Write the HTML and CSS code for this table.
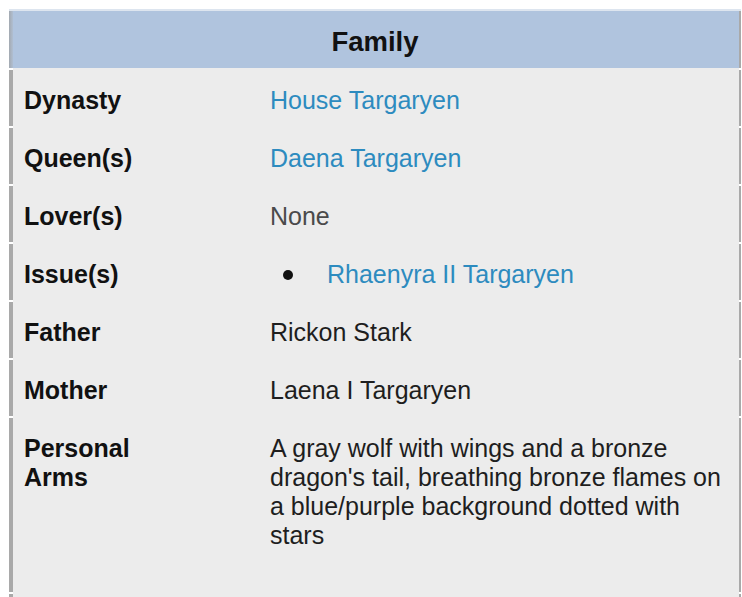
FILE: index.html
```html
<!DOCTYPE html>
<html>
<head>
<meta charset="utf-8">
<link rel="stylesheet" href="styles.css">
</head>
<body>
<div class="infobox">
  <div class="head">Family</div>
  <div class="row">
    <div class="label">Dynasty</div>
    <div class="value"><a class="link">House Targaryen</a></div>
  </div>
  <div class="row">
    <div class="label">Queen(s)</div>
    <div class="value"><a class="link">Daena Targaryen</a></div>
  </div>
  <div class="row">
    <div class="label">Lover(s)</div>
    <div class="value muted">None</div>
  </div>
  <div class="row">
    <div class="label">Issue(s)</div>
    <div class="value">
      <ul class="list"><li class="item"><a class="link">Rhaenyra II Targaryen</a></li></ul>
    </div>
  </div>
  <div class="row">
    <div class="label">Father</div>
    <div class="value">Rickon Stark</div>
  </div>
  <div class="row">
    <div class="label">Mother</div>
    <div class="value">Laena I Targaryen</div>
  </div>
  <div class="row tall">
    <div class="label">Personal<br>Arms</div>
    <div class="value">A gray wolf with wings and a bronze dragon's tail, breathing bronze flames on a blue/purple background dotted with stars</div>
  </div>
  <div class="row stub"></div>
</div>
</body>
</html>
```

FILE: styles.css
```css
html, body {
  margin: 0;
  padding: 0;
  background: #ffffff;
}
body {
  font-family: "Liberation Sans", Arial, sans-serif;
  overflow: hidden;
  height: 597px;
}
.infobox {
  margin: 9px 0 0 9px;
  width: 732px;
  border-top: 2px solid #dde5ef;
}
.head {
  height: 57px;
  box-sizing: border-box;
  padding-top: 5px;
  line-height: 52px;
  text-align: center;
  font-size: 27.5px;
  font-weight: bold;
  color: #111;
  background:
    linear-gradient(to right, #a3a9b0, #b0bfd2) left top / 4px 100% no-repeat,
    linear-gradient(#a9a9a9, #a9a9a9) right top / 2px 100% no-repeat,
    #b0c4de;
}
.row {
  display: grid;
  grid-template-columns: 257px 1fr;
  height: 58px;
  box-sizing: border-box;
  padding: 18px 8px 11px 4px;
  font-size: 25px;
  line-height: 29px;
  color: #1a1a1a;
  background:
    linear-gradient(#fff, #fff) left top / 4px 2px no-repeat,
    linear-gradient(#fff, #fff) right top / 2px 2px no-repeat,
    linear-gradient(#a9a9a9, #a9a9a9) left top / 4px 100% no-repeat,
    linear-gradient(#a9a9a9, #a9a9a9) right top / 2px 100% no-repeat,
    #ececec;
}
.row.tall {
  height: 176px;
  padding-top: 18px;
}
.row.stub {
  height: 12px;
  padding: 0;
}
.label {
  padding-left: 11px;
  font-weight: bold;
  color: #111;
}
.value {
  color: #1e1e1e;
}
.muted {
  color: #4a4a4a;
}
.link {
  color: #2d8bbf;
  text-decoration: none;
}
.list {
  list-style: none;
  margin: 0;
  padding: 0;
}
.item {
  display: flex;
  align-items: center;
}
.item::before {
  content: "";
  width: 10px;
  height: 10px;
  border-radius: 50%;
  background: #111;
  margin-left: 13px;
  margin-right: 34px;
}
```
